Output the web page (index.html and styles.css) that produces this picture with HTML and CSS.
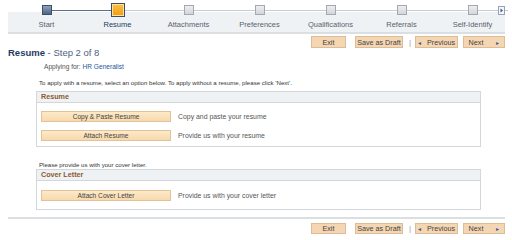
FILE: index.html
```html
<!DOCTYPE html>
<html>
<head>
    <meta charset="UTF-8" />
    <title>Resume - Step 2 of 8</title>
    <link rel="stylesheet" href="styles.css">
</head>
<body>
    <div class="page">
        <div class="steps">
            <div class="step done first">
                <div class="track"><span class="box"></span></div>
                <div class="label">Start</div>
            </div>
            <div class="step current">
                <div class="track"><span class="box"></span></div>
                <div class="label">Resume</div>
            </div>
            <div class="step">
                <div class="track"><span class="box"></span></div>
                <div class="label">Attachments</div>
            </div>
            <div class="step">
                <div class="track"><span class="box"></span></div>
                <div class="label">Preferences</div>
            </div>
            <div class="step">
                <div class="track"><span class="box"></span></div>
                <div class="label">Qualifications</div>
            </div>
            <div class="step">
                <div class="track"><span class="box"></span></div>
                <div class="label">Referrals</div>
            </div>
            <div class="step">
                <div class="track"><span class="box"></span></div>
                <div class="label">Self-Identify</div>
            </div>
            <span class="more">
                <svg width="7" height="9" viewBox="0 0 7 9">
                    <rect x="0.5" y="0.5" width="6" height="8" fill="#f4f6f8" stroke="#9aa3ad" />
                    <path d="M2.5 2.5 L5 4.5 L2.5 6.5 Z" fill="#2d5fa0" />
                </svg>
            </span>
        </div>

        <div class="toolbar">
            <button class="btn w-exit">Exit</button>
            <button class="btn w-draft">Save as Draft</button>
            <span class="sep">|</span>
            <button class="btn w-prev"><span class="arr">&#9666;</span>Previous</button>
            <button class="btn w-next">Next<span class="arr">&#9656;</span></button>
        </div>

        <h1 class="title"><b>Resume</b> - Step 2 of 8</h1>
        <p class="applying">Applying for: <a href="#">HR Generalist</a></p>
        <p class="note">To apply with a resume, select an option below. To apply without a resume, please click 'Next'.</p>

        <div class="panel">
            <div class="panel-head">Resume</div>
            <div class="panel-body">
                <div class="row">
                    <button class="wide">Copy &amp; Paste Resume</button>
                    <span class="desc">Copy and paste your resume</span>
                </div>
                <div class="row">
                    <button class="wide">Attach Resume</button>
                    <span class="desc">Provide us with your resume</span>
                </div>
            </div>
        </div>

        <p class="note cover-note">Please provide us with your cover letter.</p>

        <div class="panel">
            <div class="panel-head">Cover Letter</div>
            <div class="panel-body cover-body">
                <div class="row">
                    <button class="wide">Attach Cover Letter</button>
                    <span class="desc">Provide us with your cover letter</span>
                </div>
            </div>
        </div>

        <div class="toolbar bottom">
            <button class="btn w-exit">Exit</button>
            <button class="btn w-draft">Save as Draft</button>
            <span class="sep">|</span>
            <button class="btn w-prev"><span class="arr">&#9666;</span>Previous</button>
            <button class="btn w-next">Next<span class="arr">&#9656;</span></button>
        </div>
    </div>
</body>
</html>
```

FILE: styles.css
```css
* {
    margin: 0;
    padding: 0;
    box-sizing: border-box;
}
body {
    font-family: "Liberation Sans", Arial, sans-serif;
    background-color: white;
    color: #333;
}
.page {
    width: 497px;
    margin-left: 8px;
}

/* step train */
.steps {
    position: relative;
    display: grid;
    grid-template-columns: repeat(7, 71px);
    padding-left: 3px;
    height: 34px;
    background: linear-gradient(to bottom, white 0, white 12px, #eef2f4 12px, #eef2f4 32px, #dcdfe1 32px);
}
.track {
    height: 20px;
    display: flex;
    justify-content: center;
    align-items: center;
    background:
        linear-gradient(#c9cdd2, #c9cdd2) no-repeat left center / 50% 1px,
        linear-gradient(#c9cdd2, #c9cdd2) no-repeat right center / 50% 1px;
}
.step.first .track {
    background: linear-gradient(#5f7088, #5f7088) no-repeat right center / 50% 1px;
}
.step.current .track {
    background:
        linear-gradient(#5f7088, #5f7088) no-repeat left center / 50% 1px,
        linear-gradient(#c9cdd2, #c9cdd2) no-repeat right center / 50% 1px;
}
.box {
    width: 10px;
    height: 10px;
    border: 1px solid #a4a9b0;
    background: linear-gradient(#eceef0, #d3d6da);
}
.done .box {
    border-color: #3d4f6a;
    background: linear-gradient(#8ea3bf, #4d6488);
}
.current .box {
    width: 14px;
    height: 14px;
    border: 1px solid #3a4d6a;
    box-shadow: inset 0 0 0 1px #fbe3a0;
    background: linear-gradient(#fbc144, #f29b14);
}
.label {
    text-align: center;
    font-size: 7.5px;
    line-height: 10px;
    color: #59636e;
}
.current .label {
    color: #1f3b63;
}
.more {
    position: absolute;
    right: 0;
    top: 6px;
    line-height: 0;
}

/* nav buttons */
.toolbar {
    display: flex;
    justify-content: flex-end;
    align-items: center;
    gap: 9px;
    margin-top: 2px;
    height: 12px;
}
.btn {
    height: 12px;
    font-family: inherit;
    font-size: 7.2px;
    color: #444;
    background: #f5d6b3;
    border: 1px solid #dfbc96;
    display: flex;
    align-items: center;
    justify-content: center;
    gap: 9px;
}
.w-exit { width: 35px; }
.w-draft { width: 48px; }
.w-prev { width: 43px; margin-left: -5px; gap: 6px; }
.w-next { width: 42px; margin-left: -4px; gap: 13px; }
.arr {
    color: #2d5fa0;
    font-size: 6px;
}
.sep {
    color: #9a9a9a;
    font-size: 8px;
    margin-left: -3px;
}

/* page header */
.title {
    font-size: 9.5px;
    line-height: 10px;
    font-weight: normal;
    color: #4d6280;
}
.title b {
    color: #1f3b63;
}
.applying {
    font-size: 6.6px;
    line-height: 8px;
    margin: 5px 0 0 36px;
    color: #555;
}
.applying a {
    color: #2356a0;
    text-decoration: none;
}
.note {
    font-size: 6.1px;
    line-height: 8px;
    margin: 8px 0 0 31px;
    color: #333;
}

/* panels */
.panel {
    width: 445px;
    margin: 4px 0 0 28px;
    border: 1px solid #d3d7db;
}
.panel-head {
    height: 11px;
    line-height: 10px;
    padding-left: 4px;
    font-size: 7.2px;
    font-weight: bold;
    color: #8d5a2e;
    background: #eef2f4;
    border-bottom: 1px solid #d3d7db;
}
.panel-body {
    display: flex;
    flex-direction: column;
    gap: 8px;
    padding: 8px 0 5px 4px;
}
.cover-body {
    padding: 9px 0 8px 4px;
}
.row {
    display: flex;
    align-items: center;
    gap: 7px;
}
.wide {
    width: 130px;
    height: 11px;
    font-family: inherit;
    font-size: 6.6px;
    color: #444;
    background: linear-gradient(#fde9c8, #f8d9ad);
    border: 1px solid #e1c39b;
}
.desc {
    font-size: 6.9px;
    color: #555;
}
.note.cover-note {
    margin-top: 14px;
}
.cover-note + .panel {
    margin-top: 0;
}
.toolbar.bottom {
    border-top: 2px solid #dcdfe1;
    padding-top: 4px;
    height: 17px;
    margin-top: 7px;
}
.toolbar.bottom .btn {
    height: 11px;
}
```
